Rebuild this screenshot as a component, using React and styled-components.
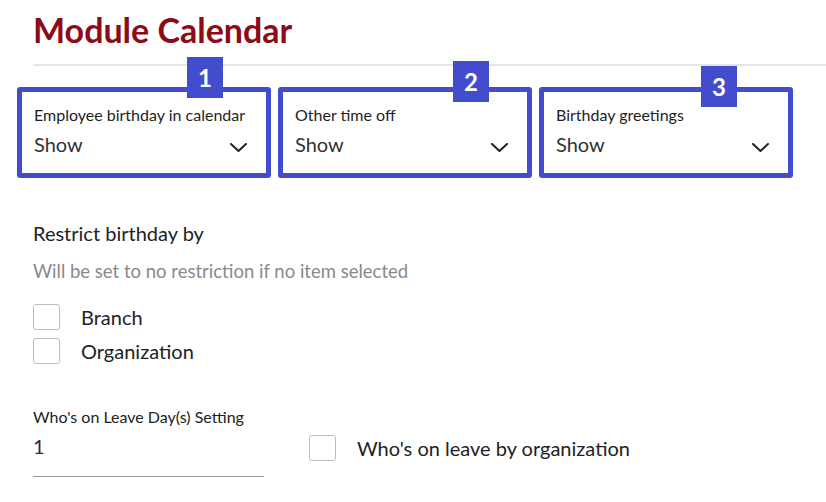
import React from "react";
import styled, { createGlobalStyle } from "styled-components";

const Global = createGlobalStyle`
  html, body { margin: 0; padding: 0; background: #fff; }
  body { font-family: Lato, "Open Sans", Arial, sans-serif; color: #222; }
  * { box-sizing: border-box; }
`;

const Page = styled.div`
  padding: 11px 0 0 33px;
  width: 826px;
  height: 502px;
  overflow: hidden;
`;

const Title = styled.h1`
  margin: 0;
  font-size: 34px;
  line-height: 38px;
  font-weight: 700;
  color: #8c0b17;
`;

const Divider = styled.div`
  margin-top: 15px;
  height: 2px;
  background: #e6e6e6;
`;

const SelectRow = styled.div`
  display: flex;
  gap: 7px;
  margin: 21px 0 0 -16px;
`;

const Box = styled.div`
  position: relative;
  width: 254px;
  height: 91px;
  border: 5px solid #444cce;
  border-radius: 3px;
  padding: 14px 19px 0 12px;
  display: flex;
  flex-direction: column;
  gap: 8px;
`;

const Badge = styled.div`
  position: absolute;
  top: ${(p) => p.$top}px;
  left: ${(p) => p.$left}px;
  width: 36px;
  height: 41px;
  background: #444cce;
  color: #fff;
  font-weight: 700;
  font-size: 24px;
  display: flex;
  align-items: center;
  justify-content: center;
`;

const FieldLabel = styled.div`
  font-size: 16px;
  line-height: 18px;
  color: #1e1e1e;
  white-space: nowrap;
`;

const ValueLine = styled.div`
  display: flex;
  align-items: center;
  justify-content: space-between;
  height: 24px;
  font-size: 20px;
  line-height: 24px;
  color: #333;
`;

const Chevron = styled.svg`
  width: 17px;
  height: 9px;
  margin-top: 7px;
`;

const Heading = styled.div`
  margin-top: 43px;
  font-size: 20px;
  line-height: 24px;
  color: #222;
`;

const Hint = styled.div`
  margin-top: 14px;
  font-size: 18.5px;
  line-height: 24px;
  color: #8a8a8a;
`;

const CheckList = styled.div`
  margin-top: 21px;
  display: flex;
  flex-direction: column;
  gap: 8px;
`;

const CheckRow = styled.label`
  display: flex;
  align-items: center;
  gap: 21px;
  font-size: 20px;
  line-height: 26px;
  color: #222;
`;

const CheckBox = styled.span`
  width: 27px;
  height: 26px;
  border: 1px solid #bdbdbd;
  border-radius: 3px;
  background: #fff;
  flex: none;
`;

const BottomRow = styled.div`
  margin-top: 44px;
  display: flex;
  align-items: flex-start;
  gap: 45px;
`;

const InputField = styled.div`
  width: 231px;
  display: flex;
  flex-direction: column;
  gap: 8px;
`;

const SmallLabel = styled.div`
  font-size: 16px;
  line-height: 18px;
  color: #222;
  white-space: nowrap;
`;

const InputValue = styled.div`
  font-size: 20px;
  line-height: 24px;
  color: #2a2a3a;
  padding-bottom: 18px;
  border-bottom: 1px solid #9a9a9a;
`;

const InlineCheck = styled(CheckRow)`
  margin-top: 27px;
`;

const selects = [
  { label: "Employee birthday in calendar", n: 1, top: -35, left: 165 },
  { label: "Other time off", n: 2, top: -31, left: 170 },
  { label: "Birthday greetings", n: 3, top: -26, left: 157 },
];

export default function App() {
  return (
    <>
      <Global />
      <Page>
        <Title>Module Calendar</Title>
        <Divider />
        <SelectRow>
          {selects.map((s) => (
            <Box key={s.n}>
              <Badge $top={s.top} $left={s.left}>{s.n}</Badge>
              <FieldLabel>{s.label}</FieldLabel>
              <ValueLine>
                <span>Show</span>
                <Chevron viewBox="0 0 17 9" fill="none">
                  <path d="M1 1l7.5 7L16 1" stroke="#222" strokeWidth="2" strokeLinecap="round" strokeLinejoin="round" />
                </Chevron>
              </ValueLine>
            </Box>
          ))}
        </SelectRow>
        <Heading>Restrict birthday by</Heading>
        <Hint>Will be set to no restriction if no item selected</Hint>
        <CheckList>
          <CheckRow><CheckBox />Branch</CheckRow>
          <CheckRow><CheckBox />Organization</CheckRow>
        </CheckList>
        <BottomRow>
          <InputField>
            <SmallLabel>Who's on Leave Day(s) Setting</SmallLabel>
            <InputValue>1</InputValue>
          </InputField>
          <InlineCheck><CheckBox />Who's on leave by organization</InlineCheck>
        </BottomRow>
      </Page>
    </>
  );
}
